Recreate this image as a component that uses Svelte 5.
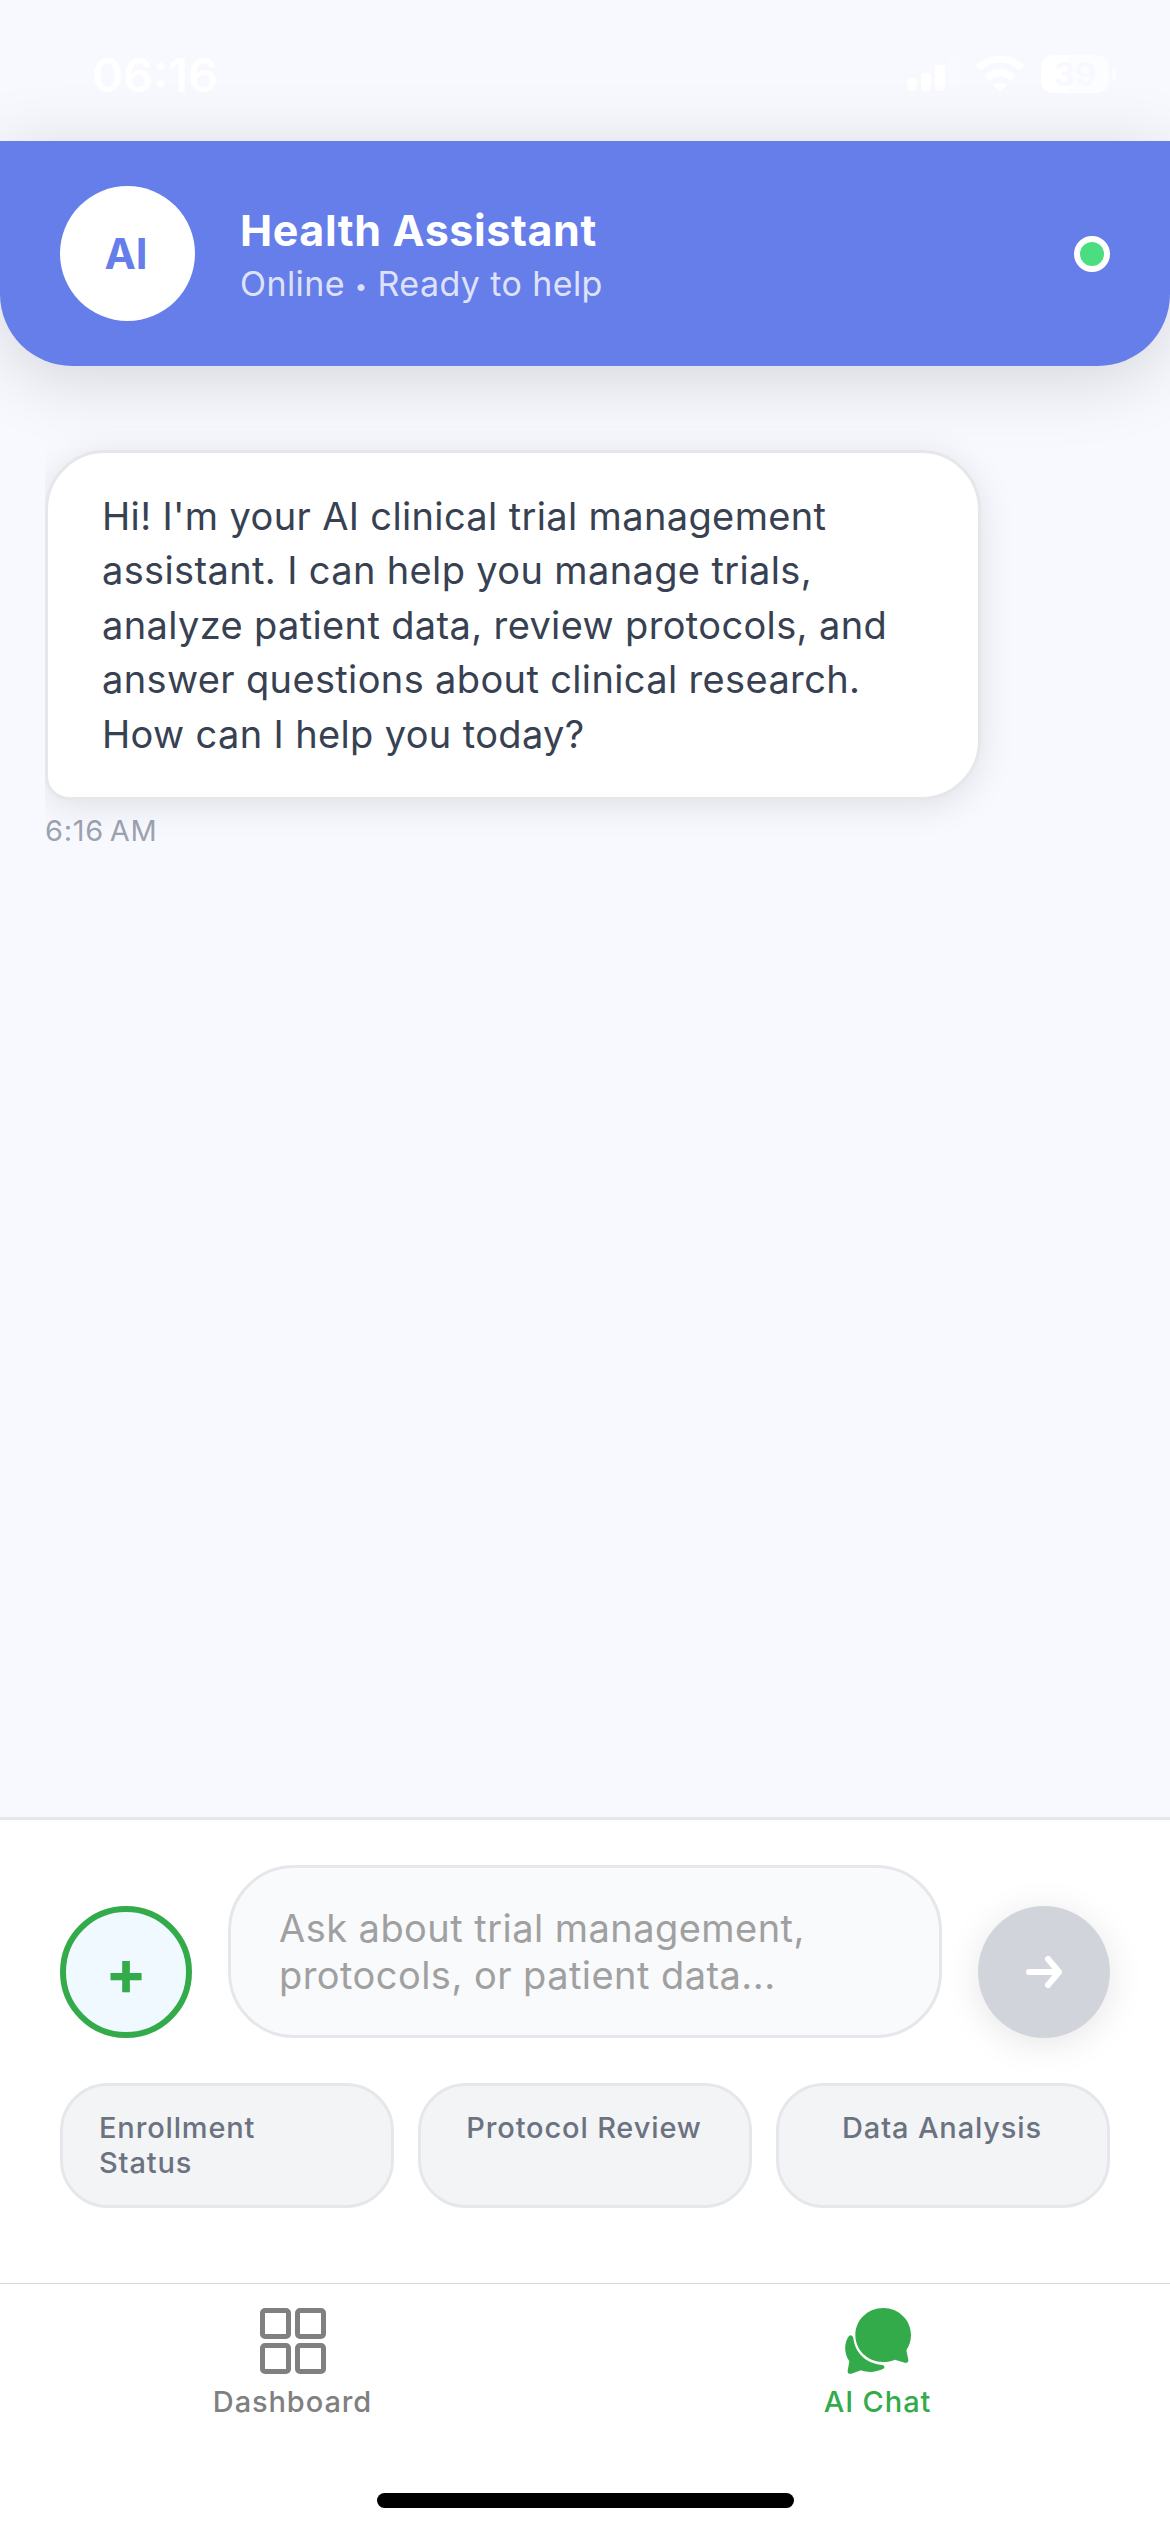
<script>
    const messages = [
        {
            id: 1,
            text: "Hi! I'm your AI clinical trial management assistant. I can help you manage trials, analyze patient data, review protocols, and answer questions about clinical research. How can I help you today?",
            time: '6:16 AM',
        },
    ];

    const actions = ['Enrollment Status', 'Protocol Review', 'Data Analysis'];

    let draft = '';
</script>

<div class="screen">
    <div class="status-bar">
        <span class="clock">06:16</span>
        <div class="status-icons">
            <svg width="52" height="38" viewBox="0 0 52 38" fill="#fff">
                <rect x="0" y="24" width="10" height="12" rx="3" />
                <rect x="14" y="18" width="10" height="18" rx="3" />
                <rect x="28" y="10" width="10" height="26" rx="3" />
                <rect x="42" y="1" width="10" height="35" rx="3" opacity=".15" />
            </svg>
            <svg width="50" height="38" viewBox="0 0 50 38" fill="none" stroke="#fff" stroke-width="7">
                <path d="M3.5 13a31 31 0 0 1 43 0" />
                <path d="M12 23a18.500 18.500 0 0 1 26 0" />
                <path d="M18 30a11 11 0 0 1 14 0l-7 7z" fill="#fff" stroke="none" />
            </svg>
            <div class="battery"><span>39</span></div>
        </div>
    </div>

    <header>
        <div class="avatar">AI</div>
        <div class="who">
            <h1>Health Assistant</h1>
            <p>Online <span class="dot">•</span> Ready to help</p>
        </div>
        <span class="online"></span>
    </header>

    <main>
        {#each messages as message (message.id)}
            <div class="message">
                <div class="bubble">{message.text}</div>
                <time>{message.time}</time>
            </div>
        {/each}
    </main>

    <section class="composer">
        <div class="input-row">
            <button class="add" aria-label="Add">+</button>
            <textarea
                bind:value={draft}
                rows="2"
                placeholder="Ask about trial management, protocols, or patient data..."
            ></textarea>
            <button class="send" aria-label="Send">
                <svg width="40" height="36" viewBox="0 0 40 36">
                    <path d="M5 18h30M24 5l11 13-11 13" />
                </svg>
            </button>
        </div>
        <div class="actions">
            {#each actions as action}
                <button class="chip"><span>{action}</span></button>
            {/each}
        </div>
    </section>

    <nav>
        <div class="tabs">
            <a href="#dashboard">
                <svg width="66" height="66" viewBox="0 0 66 66" fill="none" stroke="currentColor" stroke-width="5">
                    {#each [2.5, 37.5] as y}
                        {#each [2.5, 37.5] as x}
                            <rect {x} {y} width="26" height="26" rx="2.5" />
                        {/each}
                    {/each}
                </svg>
                Dashboard
            </a>
            <a href="#chat" class="active">
                <svg width="66" height="66" viewBox="0 0 198 198" fill="currentColor">
                    <path
                        d="M115 0C161 0 198 36 198 81C198 99 193 112 184 127L190 155C191 162 186 166 179 164L150 155C139 160 127 162 115 162C68 162 31 126 31 81C31 36 68 0 115 0Z"
                    />
                    <path
                        d="M12 84C18 79 24 84 25 91C31 136 62 166 111 171C120 172 121 180 112 184C94 192 72 195 48 187L19 197C12 199 7 195 8 188L13 160C-4 135-3 103 12 84Z"
                    />
                </svg>
                AI Chat
            </a>
        </div>
        <div class="home-indicator"></div>
    </nav>
</div>

<style>
    :global(body) {
        margin: 0;
    }

    .screen {
        width: 1170px;
        height: 2532px;
        display: flex;
        flex-direction: column;
        overflow: hidden;
        background: #f8f9ff;
        font-family: Inter, 'Liberation Sans', sans-serif;
    }

    button {
        box-sizing: border-box;
        margin: 0;
        font-family: inherit;
    }

    .status-bar {
        box-sizing: border-box;
        height: 141px;
        padding: 54px 55px 0 92px;
        display: flex;
        justify-content: space-between;
        align-items: flex-start;
        color: #fff;
    }

    .clock {
        font-size: 47px;
        line-height: 42px;
        font-weight: 600;
    }

    .status-icons {
        display: flex;
        gap: 16px;
        padding-top: 1px;
    }

    .battery {
        position: relative;
        width: 68px;
        height: 38px;
        margin-right: 6px;
        border-radius: 12px;
        background: linear-gradient(to right, #fff 39%, #fcfdff 39%);
        color: #f8f9ff;
        font-size: 33px;
        font-weight: 700;
        line-height: 38px;
        text-align: center;
    }

    .battery::after {
        content: '';
        position: absolute;
        top: 13px;
        right: -7px;
        width: 4px;
        height: 12px;
        border-radius: 0 4px 4px 0;
        background: #fcfdff;
    }

    header {
        box-sizing: border-box;
        height: 225px;
        padding: 0 60px;
        display: flex;
        align-items: center;
        gap: 45px;
        background: #667eea;
        border-radius: 0 0 72px 72px;
        box-shadow: 0 12px 72px rgba(0, 0, 0, 0.15);
        color: #fff;
    }

    .avatar {
        width: 135px;
        height: 135px;
        border-radius: 50%;
        background: #fff;
        color: #667eea;
        font-size: 42px;
        font-weight: 700;
        line-height: 135px;
        text-align: center;
        text-indent: -3px;
    }

    .who {
        flex: 1;
        padding-top: 3px;
    }

    h1 {
        margin: 0;
        font-size: 43px;
        font-weight: 700;
        line-height: 54px;
        letter-spacing: 0.6px;
    }

    header p {
        margin: 3px 0 0;
        font-size: 34px;
        line-height: 48px;
        letter-spacing: 0.4px;
        color: rgba(255, 255, 255, 0.8);
    }

    .dot {
        font-size: 22px;
        line-height: 1;
        vertical-align: 2px;
    }

    .online {
        box-sizing: border-box;
        width: 36px;
        height: 36px;
        border: 6px solid #fff;
        border-radius: 50%;
        background: #4ade80;
    }

    main {
        flex: 1;
        padding: 84px 45px 0;
    }

    .message {
        display: flex;
        flex-direction: column;
        align-items: flex-start;
    }

    .bubble {
        box-sizing: border-box;
        width: 936px;
        padding: 36px 54px;
        border: 3px solid #e5e7eb;
        border-radius: 60px 60px 60px 24px;
        background: #fff;
        box-shadow: 0 6px 36px rgba(0, 0, 0, 0.1);
        clip-path: inset(-60px -60px -60px 0);
        font-size: 38px;
        line-height: 54.4px;
        letter-spacing: 0.36px;
        color: #374151;
    }

    time {
        margin-top: 13px;
        font-size: 29px;
        line-height: 36px;
        letter-spacing: 0.7px;
        word-spacing: -3px;
        color: #9ca3af;
    }

    .composer {
        box-sizing: border-box;
        height: 466px;
        padding: 45px 60px 0;
        border-top: 3px solid #e5e7eb;
        background: #fff;
    }

    .input-row {
        display: flex;
        align-items: flex-end;
        gap: 36px;
    }

    .add,
    .send {
        flex: none;
        width: 132px;
        height: 132px;
        padding: 0;
        border-radius: 50%;
        display: flex;
        align-items: center;
        justify-content: center;
    }

    .add {
        border: 6px solid #34ab4a;
        background: #f0f9ff;
        color: #34ab4a;
        font-size: 62px;
        font-weight: 700;
    }

    .send {
        border: 0;
        background: #d1d5db;
        box-shadow: 0 6px 36px rgba(0, 0, 0, 0.1);
    }

    .send path {
        fill: none;
        stroke: #fff;
        stroke-width: 6;
        stroke-linecap: round;
        stroke-linejoin: round;
    }

    textarea {
        box-sizing: border-box;
        flex: 1;
        min-width: 0;
        height: 173px;
        margin: 0;
        padding: 37px 48px 35px;
        border: 3px solid #e5e7eb;
        border-radius: 66px;
        background: #f9fafc;
        outline: none;
        resize: none;
        overflow: hidden;
        font-family: inherit;
        font-size: 38px;
        line-height: 47px;
        letter-spacing: 0.45px;
        color: #374151;
    }

    textarea::placeholder {
        color: #a0a0a0;
        opacity: 1;
    }

    .actions {
        display: flex;
        gap: 24px;
        margin-top: 45px;
    }

    .chip {
        flex: 1;
        min-width: 0;
        height: 125px;
        padding: 24px 38px 24px 36px;
        border: 3px solid #e5e7eb;
        border-radius: 48px;
        background: #f3f4f6;
        display: flex;
        justify-content: center;
        align-items: flex-start;
        font-size: 29px;
        font-weight: 500;
        line-height: 35px;
        letter-spacing: 0.85px;
        text-align: left;
        color: #6b7280;
    }

    nav {
        box-sizing: border-box;
        height: 249px;
        border-top: 1px solid #d8d8d8;
        background: #fff;
        display: flex;
        flex-direction: column;
        align-items: center;
        justify-content: space-between;
        padding: 24px 0;
    }

    .tabs {
        display: flex;
        width: 100%;
    }

    .tabs a {
        flex: 1;
        display: flex;
        flex-direction: column;
        align-items: center;
        gap: 10px;
        font-size: 29px;
        font-weight: 500;
        line-height: 36px;
        letter-spacing: 0.9px;
        text-decoration: none;
        color: #808080;
    }

    .tabs .active {
        color: #34ab4a;
    }

    .home-indicator {
        width: 417px;
        height: 15px;
        border-radius: 8px;
        background: #000;
    }
</style>
